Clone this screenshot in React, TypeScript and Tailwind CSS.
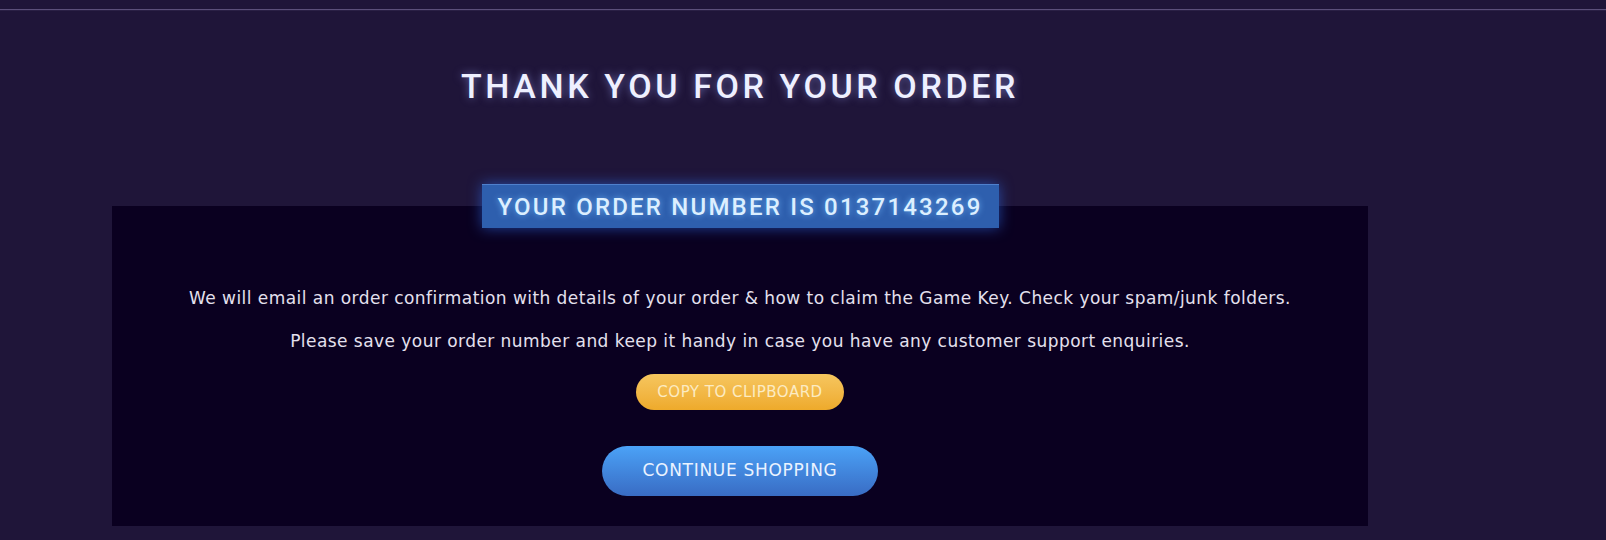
const headingFont = { fontFamily: 'Roboto, "Noto Sans", sans-serif' }

const OrderConfirmation = () => {
  const orderNumber = '0137143269'

  return (
    <div className="min-h-[540px] w-full bg-[#1f1539] font-['DejaVu_Sans',sans-serif]">
      <div className="h-[9px]" />
      <div className="h-px bg-[#5b4f7a]" />
      <div className="h-px bg-[#2a2045]" />

      <div className="ml-[112px] w-[1256px]">
        <h1
          style={headingFont}
          className="pt-[55px] text-center text-[34px] font-medium leading-[40px] tracking-[3.6px] text-[#eef0ff] [text-shadow:0_0_8px_rgba(160,170,255,0.55)]"
        >
          THANK YOU FOR YOUR ORDER
        </h1>

        <div className="mt-[78px] flex justify-center">
          <div
            style={headingFont}
            className="relative z-10 -mb-[22px] flex h-[44px] w-[517px] items-center justify-center whitespace-nowrap border-t border-[#4f80cc] bg-[#2e5fae] text-[24px] font-medium tracking-[2.2px] text-[#dcefff] shadow-[0_0_14px_rgba(50,120,255,0.55)] [text-shadow:0_0_6px_rgba(120,190,255,0.8)]"
          >
            YOUR ORDER NUMBER IS {orderNumber}
          </div>
        </div>

        <div className="flex h-[320px] flex-col items-center bg-[#0a0020] pt-[80px]">
          <p className="text-[17px] leading-[24px] tracking-[0.45px] text-[#e4e0ee]">
            We will email an order confirmation with details of your order &amp; how to claim the Game Key. Check your spam/junk folders.
          </p>
          <p className="mt-[19px] text-[17px] leading-[24px] tracking-[0.45px] text-[#e4e0ee]">
            Please save your order number and keep it handy in case you have any customer support enquiries.
          </p>
          <button className="mt-[21px] h-[36px] w-[208px] rounded-full bg-linear-to-b from-[#f6c65e] to-[#eeaa2a] text-[15px] tracking-[0.5px] text-[#fcebc2]">
            COPY TO CLIPBOARD
          </button>
          <button className="mt-[36px] h-[50px] w-[276px] rounded-full bg-linear-to-b from-[#4ba2f7] to-[#396cc4] text-[17px] tracking-[0.7px] text-[#eaf3ff]">
            CONTINUE SHOPPING
          </button>
        </div>
      </div>
    </div>
  )
}

export default OrderConfirmation
